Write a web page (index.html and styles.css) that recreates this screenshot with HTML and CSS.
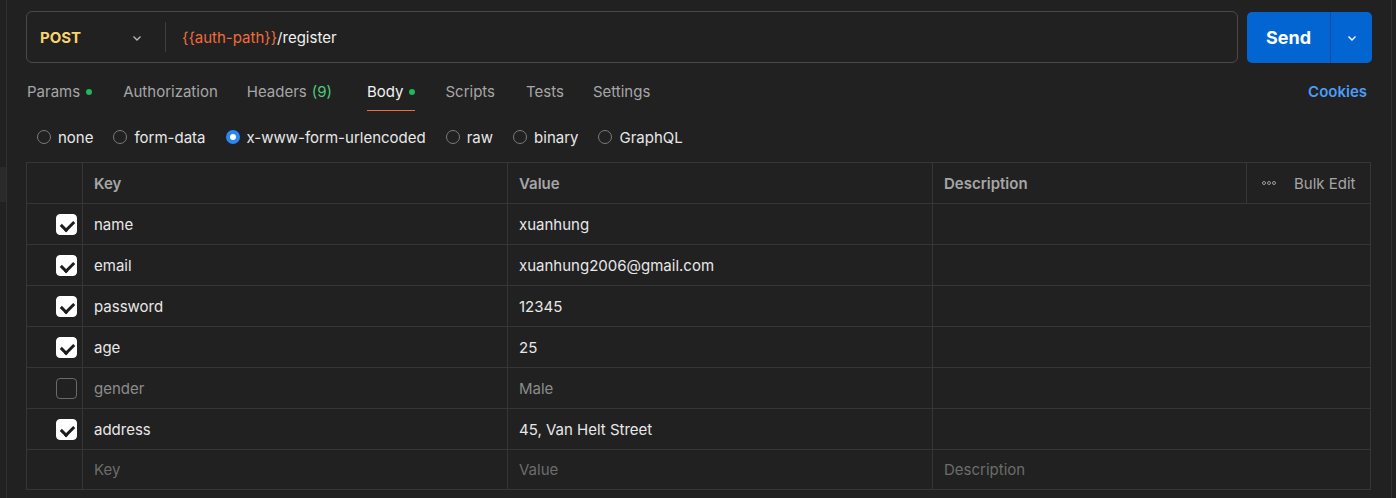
FILE: index.html
```html
<!DOCTYPE html>
<html>
<head>
<meta charset="utf-8">
<link rel="stylesheet" href="styles.css">
</head>
<body>
<div class="app">
  <div class="edge-left"><div class="edge-tab"></div></div>
  <main class="main">
    <div class="urlbar">
      <div class="urlbox">
        <div class="method">POST
          <svg class="chev" width="12" height="12" viewBox="0 0 12 12"><path d="M2.5 4.5 L6 8 L9.5 4.5" fill="none" stroke="#b8b8b8" stroke-width="1.3"/></svg>
        </div>
        <div class="vsep"></div>
        <div class="url"><span class="var">{{auth-path}}</span>/register</div>
      </div>
      <div class="send">
        <div class="send-label">Send</div>
        <div class="send-split">
          <svg width="12" height="12" viewBox="0 0 12 12"><path d="M2.5 4.5 L6 8 L9.5 4.5" fill="none" stroke="#fff" stroke-width="1.4"/></svg>
        </div>
      </div>
    </div>

    <div class="tabs">
      <div class="tab t-params">Params<span class="dot"></span></div>
      <div class="tab t-auth">Authorization</div>
      <div class="tab t-headers">Headers <span class="count">(9)</span></div>
      <div class="tab active t-body">Body<span class="dot"></span></div>
      <div class="tab t-scripts">Scripts</div>
      <div class="tab t-tests">Tests</div>
      <div class="tab">Settings</div>
      <div class="spacer"></div>
      <div class="cookies">Cookies</div>
    </div>

    <div class="radios">
      <label class="radio"><span class="rb"></span>none</label>
      <label class="radio"><span class="rb"></span>form-data</label>
      <label class="radio"><span class="rb on"></span>x-www-form-urlencoded</label>
      <label class="radio"><span class="rb"></span>raw</label>
      <label class="radio"><span class="rb"></span>binary</label>
      <label class="radio"><span class="rb"></span>GraphQL</label>
    </div>

    <div class="table">
      <div class="row head">
        <div class="c chk"></div>
        <div class="c key">Key</div>
        <div class="c val">Value</div>
        <div class="c desc">Description</div>
        <div class="c bulk"><span class="dots"><i></i><i></i><i></i></span>Bulk Edit</div>
      </div>
      <div class="row"><div class="c chk"><span class="cb on"></span></div><div class="c key">name</div><div class="c val">xuanhung</div><div class="c desc2"></div></div>
      <div class="row"><div class="c chk"><span class="cb on"></span></div><div class="c key">email</div><div class="c val">xuanhung2006@gmail.com</div><div class="c desc2"></div></div>
      <div class="row"><div class="c chk"><span class="cb on"></span></div><div class="c key">password</div><div class="c val">12345</div><div class="c desc2"></div></div>
      <div class="row"><div class="c chk"><span class="cb on"></span></div><div class="c key">age</div><div class="c val">25</div><div class="c desc2"></div></div>
      <div class="row off"><div class="c chk"><span class="cb"></span></div><div class="c key">gender</div><div class="c val">Male</div><div class="c desc2"></div></div>
      <div class="row"><div class="c chk"><span class="cb on"></span></div><div class="c key">address</div><div class="c val">45, Van Helt Street</div><div class="c desc2"></div></div>
      <div class="row ph"><div class="c chk"></div><div class="c key">Key</div><div class="c val">Value</div><div class="c desc2">Description</div></div>
    </div>
  </main>
  <div class="edge-right"></div>
</div>
</body>
</html>
```

FILE: styles.css
```css
* { box-sizing: border-box; }
html, body { margin: 0; padding: 0; }
body {
  background: #212121;
  font-family: Inter, "Noto Sans", sans-serif;
  font-size: 15px;
  color: #e8e8e8;
  width: 1396px;
  height: 498px;
  overflow: hidden;
}
.app { display: flex; height: 498px; }
.edge-left {
  width: 7px;
  border-right: 1px solid #303030;
  background: #212121;
  padding-top: 167px;
}
.edge-tab { height: 35px; background: #2a2a2a; width: 6px; }
.edge-right { width: 5px; border-left: 1px solid #303030; margin-left: 19px; }
.main { width: 1365px; padding-left: 19px; padding-top: 11px; }

.urlbar { display: flex; gap: 9px; height: 52px; }
.urlbox {
  width: 1212px;
  height: 52px;
  border: 1px solid #4a4a4a;
  border-radius: 6px;
  display: flex;
  align-items: center;
}
.method {
  width: 138px;
  padding-left: 13px;
  font-weight: 700;
  color: #f7d56b;
  font-size: 15px;
  display: flex;
  align-items: center;
  justify-content: space-between;
  padding-right: 22px;
}
.chev { margin-top: 1px; }
.vsep { width: 1px; height: 30px; background: #3d3d3d; }
.url { padding-left: 16px; color: #f0f0f0; }
.var { color: #f26b3a; }

.send {
  width: 125px;
  height: 51px;
  margin-top: 1px;
  background: #0265d2;
  border-radius: 5px;
  display: flex;
  color: #fff;
}
.send-label {
  width: 84px;
  display: flex; align-items: center; justify-content: center;
  font-weight: 700;
  font-size: 18px;
  border-right: 1px solid #0a4fa0;
}
.send-split { flex: 1; display: flex; align-items: center; justify-content: center; }

.tabs {
  display: flex;
  align-items: center;
  height: 56px;
  padding-left: 1px;
  color: #a6a6a6;
}
.tab {
  margin-right: 29px;
  height: 100%;
  display: flex;
  align-items: center;
  position: relative;
}
.t-params { margin-right: 31px; }
.t-auth { margin-right: 29px; }
.t-headers { margin-right: 35px; }
.t-body { margin-right: 30px; }
.t-scripts { margin-right: 31px; }
.t-tests { margin-right: 29px; }
.tab.active { color: #f2f2f2; }
.tab.active::after {
  content: "";
  position: absolute;
  left: 0; right: 0; bottom: 8px;
  height: 1px;
  background: #f26b3a;
}
.dot { width: 6px; height: 6px; border-radius: 50%; background: #1db954; margin-left: 6px; margin-top: 1px; }
.count { color: #4fc97a; margin-left: 5px; }
.spacer { flex: 1; }
.cookies { color: #4a9df8; font-weight: 600; margin-right: 5px; }

.radios {
  display: flex;
  align-items: center;
  height: 36px;
  padding-left: 11px;
  color: #e8e8e8;
}
.radio { display: flex; align-items: center; margin-right: 20px; }
.rb {
  width: 14px; height: 14px;
  border: 1px solid #7a7a7a;
  border-radius: 50%;
  margin-right: 7px;
}
.rb.on { border: 4px solid #2b86f5; background: #fff; }

.table {
  margin-top: 7px;
  width: 1345px;
  border: 1px solid #363636;
}
.row { display: flex; height: 41px; border-top: 1px solid #363636; }
.row:first-child { border-top: none; height: 40px; }
.row:last-child { height: 40px; }
.c { display: flex; align-items: center; height: 100%; }
.chk { width: 56px; border-right: 1px solid #363636; justify-content: flex-end; padding-right: 5px; }
.key { width: 425px; border-right: 1px solid #363636; padding-left: 11px; }
.val { width: 425px; border-right: 1px solid #363636; padding-left: 11px; }
.desc { width: 314px; border-right: 1px solid #363636; padding-left: 11px; }
.desc2 { flex: 1; padding-left: 11px; }
.bulk { flex: 1; padding-left: 15px; color: #a6a6a6; }
.head .c { color: #a6a6a6; font-weight: 600; }
.head .bulk { font-weight: 400; }
.dots { display: flex; gap: 1px; margin-right: 18px; }
.dots i { width: 4px; height: 4px; border: 1px solid #9a9a9a; border-radius: 50%; }
.cb {
  width: 21px; height: 21px;
  border-radius: 4px;
  border: 1px solid #6a6a6a;
  background: transparent;
  position: relative;
}
.cb.on { background: #fff; border-color: #fff; }
.cb.on::after {
  content: "";
  position: absolute;
  left: 6px; top: 3px;
  width: 6px; height: 10px;
  border: solid #1d1d1d;
  border-width: 0 3px 3px 0;
  transform: rotate(45deg);
}
.row.off .c { color: #8c8c8c; }
.row.ph .c { color: #6c6c6c; }
```
